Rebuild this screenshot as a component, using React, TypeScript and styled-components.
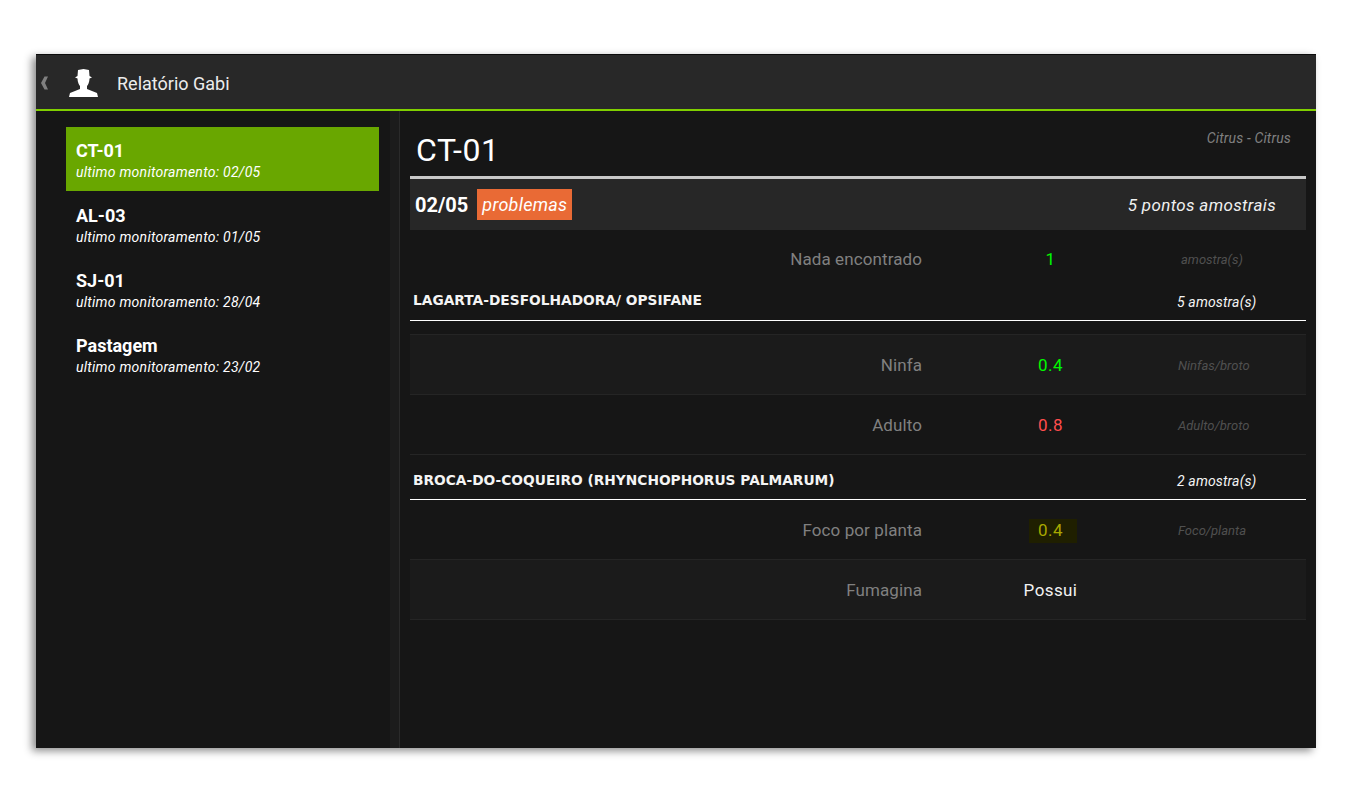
import { createGlobalStyle, styled } from 'styled-components';

interface Field {
    label: string;
    value: string;
    unit?: string;
    tone?: 'ok' | 'bad' | 'warn' | 'plain';
}

const farms = [
    { name: 'CT-01', last: '02/05' },
    { name: 'AL-03', last: '01/05' },
    { name: 'SJ-01', last: '28/04' },
    { name: 'Pastagem', last: '23/02' },
];

const toneColors = { ok: '#00f800', bad: '#ff4d4d', warn: '#a8a800', plain: '#f2f2f2' };

const GlobalStyle = createGlobalStyle`
    html, body {
        margin: 0;
        background: #fff;
    }
    body {
        font-family: Roboto, "Liberation Sans", sans-serif;
    }
`;

const Page = styled.div`
    width: 1350px;
    height: 800px;
    padding: 54px 34px 52px 36px;
    box-sizing: border-box;
    overflow: hidden;
`;

const Tablet = styled.div`
    height: 694px;
    display: flex;
    flex-direction: column;
    background: #161616;
    box-shadow: -4px 3px 8px rgba(0, 0, 0, 0.45);
`;

const ActionBar = styled.header`
    flex: none;
    display: flex;
    align-items: center;
    height: 52px;
    padding-top: 2px;
    background: #282828;
    border-top: 1px solid #0c0c0c;
    border-bottom: 2px solid #80cf00;
`;

const BackIcon = styled.svg`
    width: 8px;
    height: 14px;
    margin-left: 4px;
    flex: none;
`;

const AppIcon = styled.svg`
    width: 30px;
    height: 28px;
    margin-left: 21px;
    margin-top: -1px;
    flex: none;
`;

const AppTitle = styled.div`
    margin-left: 18px;
    font-size: 18px;
    color: #ececec;
`;

const Body = styled.div`
    flex: 1;
    display: flex;
    min-height: 0;
`;

const Sidebar = styled.nav`
    width: 364px;
    flex: none;
    box-sizing: border-box;
    padding: 16px 20px 0 30px;
    background: linear-gradient(to right, #161616 354px, #1c1c1c 354px);
    border-right: 1px solid #2b2b2b;
`;

const FarmItem = styled.div<{ $active?: boolean }>`
    height: 64px;
    margin-bottom: 1px;
    padding: 13px 10px 0;
    box-sizing: border-box;
    background: ${(p) => (p.$active ? '#69a700' : 'transparent')};
    color: #fff;
`;

const FarmName = styled.div`
    font-size: 18px;
    font-weight: 700;
    line-height: 21px;
`;

const FarmDate = styled.div`
    font-size: 14px;
    font-style: italic;
    letter-spacing: 0.26px;
    line-height: 21px;
    margin-top: 1px;
`;

const Report = styled.main`
    flex: 1;
    padding: 0 10px;
    min-width: 0;
`;

const TitleRow = styled.div`
    height: 65px;
    display: flex;
    justify-content: space-between;
`;

const ReportTitle = styled.h1`
    margin: 19px 0 0 6px;
    font-size: 32px;
    font-weight: 400;
    letter-spacing: 0.6px;
    line-height: 40px;
    color: #fff;
`;

const CropName = styled.div`
    margin: 18px 15px 0 0;
    font-size: 14px;
    font-style: italic;
    letter-spacing: 0.15px;
    line-height: 18px;
    color: #808080;
`;

const VisitBar = styled.div`
    height: 51px;
    display: flex;
    align-items: center;
    border-top: 3px solid #c8c8c8;
    background: #272727;
`;

const VisitDate = styled.div`
    margin-left: 5px;
    font-size: 20px;
    font-weight: 700;
    color: #fff;
`;

const StatusBadge = styled.div`
    margin-left: 9px;
    padding: 0 5px;
    height: 31px;
    line-height: 31px;
    font-size: 18px;
    font-style: italic;
    letter-spacing: 0.25px;
    color: #fff;
    background: #e96a35;
`;

const SampleTotal = styled.div`
    margin-left: auto;
    margin-right: 30px;
    font-size: 17px;
    font-style: italic;
    letter-spacing: 0.35px;
    color: #f0f0f0;
`;

const Row = styled.div<{ $striped?: boolean; $height?: number }>`
    height: ${(p) => p.$height ?? 60}px;
    padding-top: ${(p) => (p.$height ? 12 : 0)}px;
    box-sizing: border-box;
    display: grid;
    grid-template-columns: 512px 256px 128px;
    align-items: center;
    background: ${(p) => (p.$striped ? '#1b1b1b' : 'transparent')};
    border-bottom: 1px solid ${(p) => (p.$height ? 'transparent' : '#252525')};
`;

const RowGroup = styled.div`
    border-top: 1px solid #252525;
`;

const RowLabel = styled.div`
    text-align: right;
    font-size: 17px;
    letter-spacing: 0.1px;
    color: #808080;
`;

const RowValue = styled.div<{ $tone: 'ok' | 'bad' | 'warn' | 'plain' }>`
    justify-self: center;
    padding-left: 1px;
    font-size: 17px;
    letter-spacing: 0.4px;
    color: ${(p) => toneColors[p.$tone]};
`;

const WarnValue = styled(RowValue)`
    position: relative;
    z-index: 0;
    &::before {
        content: '';
        position: absolute;
        z-index: -1;
        inset: -1px -14px -3px -8px;
        background: #1f1f00;
    }
`;

const RowUnit = styled.div<{ $indent?: number }>`
    padding-left: ${(p) => p.$indent ?? 0}px;
    padding-top: 2px;
    font-size: 13px;
    font-style: italic;
    color: #505050;
`;

const PestHeading = styled.div<{ $gap?: number }>`
    height: 45px;
    box-sizing: border-box;
    display: grid;
    grid-template-columns: 767px 129px;
    align-items: end;
    padding-bottom: 9px;
    border-bottom: 1px solid #fff;
    margin-bottom: ${(p) => p.$gap ?? 0}px;
`;

const PestName = styled.div<{ $lift: number }>`
    padding-left: 3px;
    margin-bottom: ${(p) => p.$lift}px;
    font-family: "DejaVu Sans", sans-serif;
    font-size: 13.75px;
    font-weight: 700;
    line-height: 18px;
    color: #f4f4f4;
`;

const PestSamples = styled.div`
    font-size: 14px;
    font-style: italic;
    letter-spacing: 0.15px;
    line-height: 18px;
    color: #f4f4f4;
`;

function FieldRow({ field, striped }: { field: Field; striped?: boolean }) {
    const Value = field.tone === 'warn' ? WarnValue : RowValue;
    return (
        <Row $striped={striped}>
            <RowLabel>{field.label}</RowLabel>
            <Value $tone={field.tone ?? 'plain'}>{field.value}</Value>
            <RowUnit>{field.unit}</RowUnit>
        </Row>
    );
}

function App() {
    return (
        <Page>
            <GlobalStyle />
            <Tablet>
                <ActionBar>
                    <BackIcon viewBox="0 0 8 14">
                        <path d="M4.5 0.5H8L5 7l3 6.5H4.5L1 7z" fill="#808080" />
                    </BackIcon>
                    <AppIcon viewBox="0 0 30 28">
                        <path
                            fill="#fff"
                            d="M9 1l5.500-1 5.500 1 .5 6 2.500 1.500-2.500 1c0 3.500-1.500 6.500-2.500 7.500v3l10 4 1 4H0l1-4 10-4v-3c-1-1-2.500-4-2.500-7.500L6 8.500 8.500 7z"
                        />
                    </AppIcon>
                    <AppTitle>Relatório Gabi</AppTitle>
                </ActionBar>
                <Body>
                    <Sidebar>
                        {farms.map((farm, i) => (
                            <FarmItem key={farm.name} $active={i === 0}>
                                <FarmName>{farm.name}</FarmName>
                                <FarmDate>ultimo monitoramento: {farm.last}</FarmDate>
                            </FarmItem>
                        ))}
                    </Sidebar>
                    <Report>
                        <TitleRow>
                            <ReportTitle>CT-01</ReportTitle>
                            <CropName>Citrus - Citrus</CropName>
                        </TitleRow>
                        <VisitBar>
                            <VisitDate>02/05</VisitDate>
                            <StatusBadge>problemas</StatusBadge>
                            <SampleTotal>5 pontos amostrais</SampleTotal>
                        </VisitBar>
                        <Row $height={46}>
                            <RowLabel>Nada encontrado</RowLabel>
                            <RowValue $tone="ok">1</RowValue>
                            <RowUnit $indent={3}>amostra(s)</RowUnit>
                        </Row>
                        <PestHeading $gap={13}>
                            <PestName $lift={2}>LAGARTA-DESFOLHADORA/ OPSIFANE</PestName>
                            <PestSamples>5 amostra(s)</PestSamples>
                        </PestHeading>
                        <RowGroup>
                            <FieldRow striped field={{ label: 'Ninfa', value: '0.4', unit: 'Ninfas/broto', tone: 'ok' }} />
                            <FieldRow field={{ label: 'Adulto', value: '0.8', unit: 'Adulto/broto', tone: 'bad' }} />
                        </RowGroup>
                        <PestHeading>
                            <PestName $lift={1}>BROCA-DO-COQUEIRO (RHYNCHOPHORUS PALMARUM)</PestName>
                            <PestSamples>2 amostra(s)</PestSamples>
                        </PestHeading>
                        <FieldRow field={{ label: 'Foco por planta', value: '0.4', unit: 'Foco/planta', tone: 'warn' }} />
                        <FieldRow striped field={{ label: 'Fumagina', value: 'Possui' }} />
                    </Report>
                </Body>
            </Tablet>
        </Page>
    );
}

export default App;
